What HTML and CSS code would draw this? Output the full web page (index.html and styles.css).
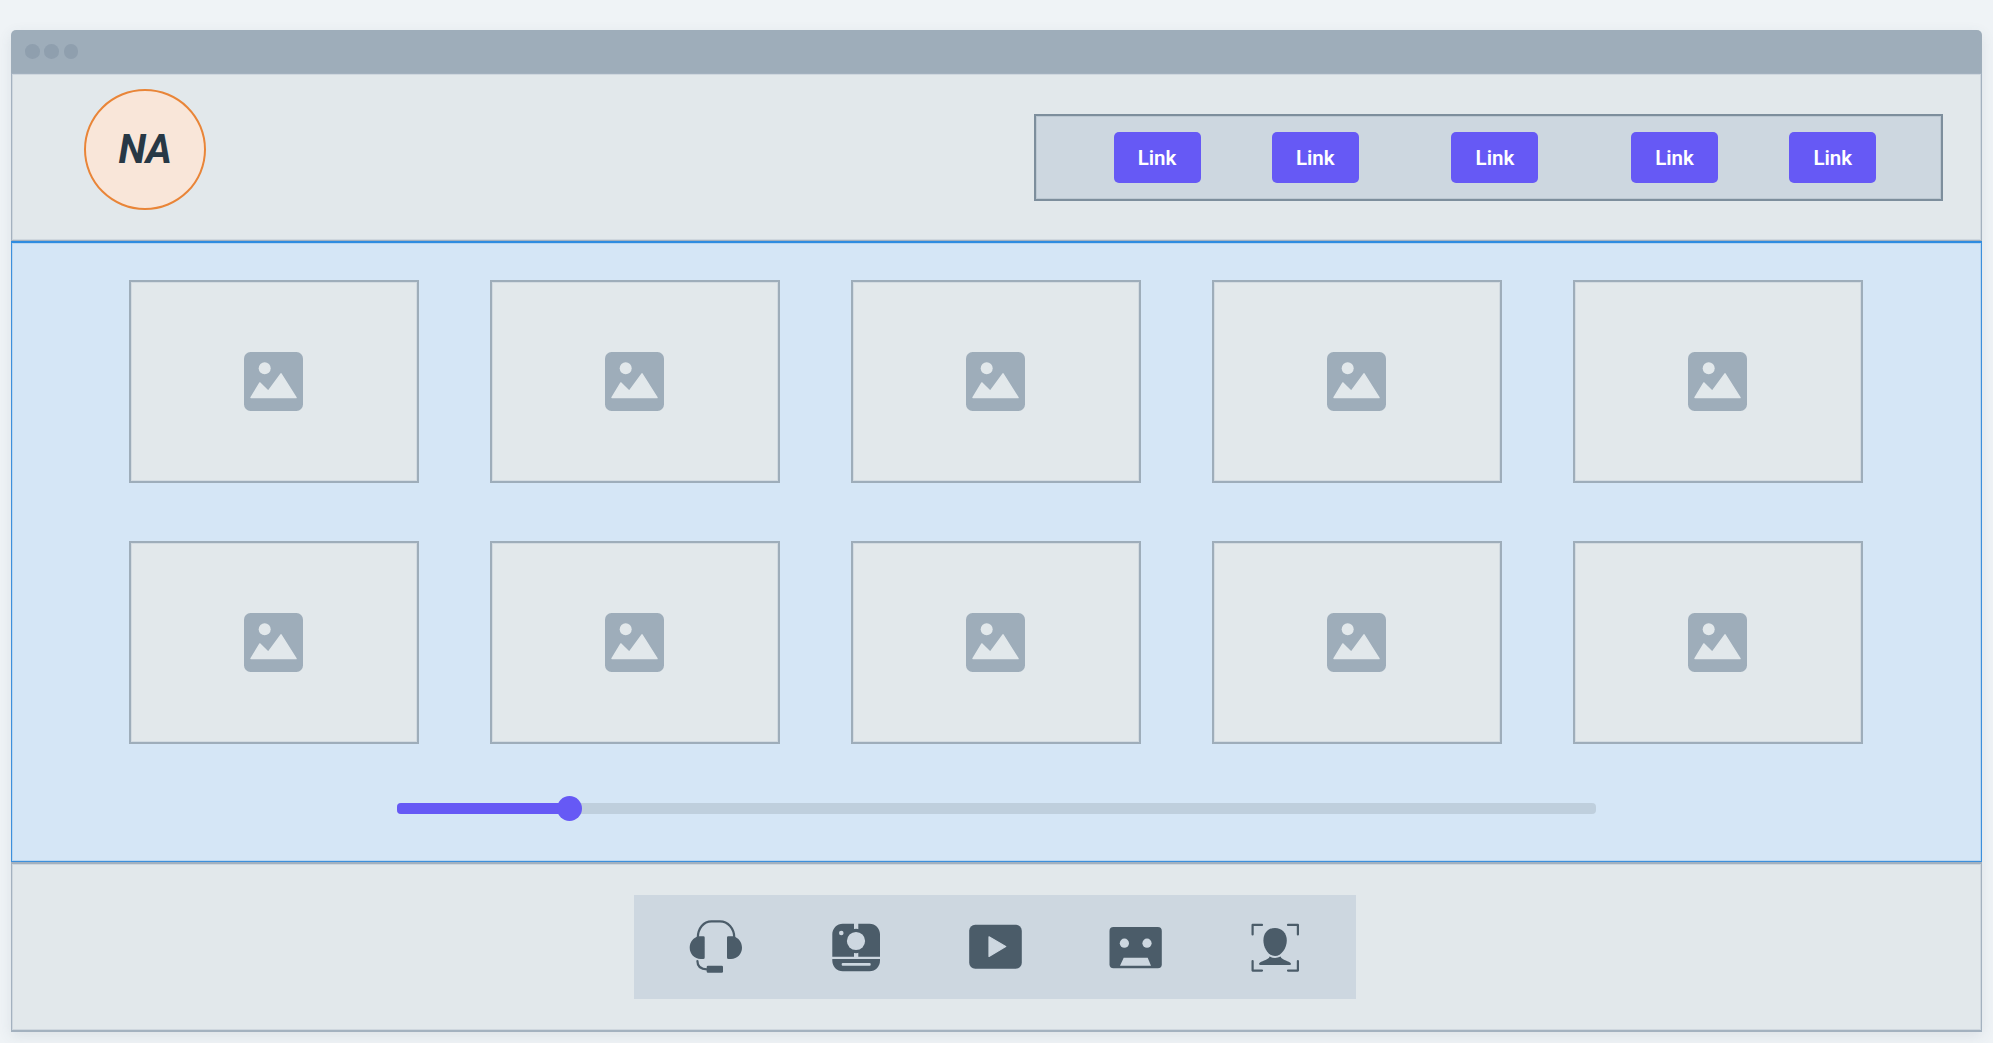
FILE: index.html
```html
<!DOCTYPE html>
<html lang="en">
<head>
<meta charset="utf-8">
<title>Gallery wireframe</title>
<link rel="stylesheet" href="styles.css">
</head>
<body>
<svg class="defs" aria-hidden="true">
  <symbol id="image" viewBox="0 0 59 59">
    <rect width="59" height="59" rx="6.5" fill="#9eadba"/>
    <circle cx="20.7" cy="16.3" r="6" fill="#e2e8eb"/>
    <path d="M7 45.6 15.9 31 24.3 39.3 37 21.9 52 45.6Z" fill="#e2e8eb" stroke="#e2e8eb" stroke-width="1.5" stroke-linejoin="round"/>
  </symbol>
</svg>
<div class="window">
  <div class="titlebar"><i></i><i></i><i></i></div>
  <header class="header">
    <div class="avatar"><span>NA</span></div>
    <nav class="nav">
      <a class="link">Link</a>
      <a class="link">Link</a>
      <a class="link wide">Link</a>
      <a class="link wide">Link</a>
      <a class="link">Link</a>
    </nav>
  </header>
  <main class="gallery">
    <div class="grid">
      <div class="card"><svg><use href="#image"/></svg></div>
      <div class="card"><svg><use href="#image"/></svg></div>
      <div class="card"><svg><use href="#image"/></svg></div>
      <div class="card"><svg><use href="#image"/></svg></div>
      <div class="card"><svg><use href="#image"/></svg></div>
      <div class="card"><svg><use href="#image"/></svg></div>
      <div class="card"><svg><use href="#image"/></svg></div>
      <div class="card"><svg><use href="#image"/></svg></div>
      <div class="card"><svg><use href="#image"/></svg></div>
      <div class="card"><svg><use href="#image"/></svg></div>
    </div>
    <div class="slider"><div class="fill"></div><div class="thumb"></div></div>
  </main>
  <footer class="footer">
    <div class="tools">
      <svg viewBox="0 0 54 54">
        <path d="M8.8 17.5C9 8.5 14.5 1.4 22.5 1.4H31C39 1.4 45.1 8.5 45.3 17.5" class="line"/>
        <path d="M15.7 17.6a1.3 1.3 0 0 0-1.3-1.3H9.2C4.2 17.8.7 22.3.7 27.8.7 34 5.5 39 11.7 39h2.5a1.5 1.5 0 0 0 1.5-1.5Z"/>
        <path d="M38 17.6a1.3 1.3 0 0 1 1.3-1.3h5.2C49.5 17.8 53 22.3 53 27.8 53 34 48.2 39 42 39h-2.5a1.5 1.5 0 0 1-1.5-1.5Z"/>
        <path d="M8.4 41C8.4 46 11.5 49.3 18 49.3" class="line"/>
        <rect x="17.7" y="45.7" width="16.3" height="7" rx="1.3"/>
      </svg>
      <svg viewBox="0 0 54 54">
        <path d="M3.3 36.7V14.2C3.3 8.4 8 3.7 13.8 3.7H25V9.6H29.3V3.7H40.5C46.3 3.7 51 8.4 51 14.2V36.7H29.3V32H25V36.7Z"/>
        <path d="M3.3 39H51v1.5C51 46.5 46.5 51.3 40.5 51.3H13.8C7.8 51.3 3.3 46.5 3.3 40.5Z"/>
        <path d="M24 10.6Q27 9 30.3 10.6M24 31.4Q27 33 30.3 31.4" class="ring"/>
        <circle cx="27" cy="21" r="9.1" class="cut"/>
        <circle cx="12.3" cy="13" r="2.3" class="cut"/>
        <rect x="12.7" y="43.1" width="29" height="2.6" rx="1" class="cut"/>
      </svg>
      <svg viewBox="0 0 54 54">
        <rect x=".2" y="4.7" width="52.6" height="44" rx="6"/>
        <path d="M20 16.8 36.7 26.6 20 36.4Z" class="cut round"/>
      </svg>
      <svg viewBox="0 0 54 54">
        <rect x=".5" y="7" width="52.3" height="41.2" rx="4"/>
        <circle cx="15.4" cy="23.2" r="4.6" class="cut"/>
        <circle cx="38" cy="23.2" r="4.6" class="cut"/>
        <path d="M14.7 37.7H38.7L42 45.8H11Z" class="cut"/>
      </svg>
      <svg viewBox="0 0 54 54">
        <path d="M3.6 14.4V4.9H13M39 4.9h9.9v9.5M48.9 41v9.6H39M13 50.6H3.6V41" class="line"/>
        <path d="M26 8C33 8 37.8 13 37.8 20.5S32.5 36 26 36 14.4 28 14.4 20.5 19 8 26 8Z"/>
        <path d="M20.6 36.6Q26 39.5 31.6 36.6C32.6 40 38 40.5 41 42.6 42.6 43.8 42 45 41 45H11C10 45 9.4 43.8 11 42.6 14 40.5 19.6 40 20.6 36.6Z"/>
      </svg>
    </div>
  </footer>
</div>
</body>
</html>
```
FILE: styles.css
```css
* { box-sizing: border-box; }
body {
  margin: 0;
  height: 1043px;
  padding: 30px 11px 0;
  overflow: hidden;
  background: #eff3f6;
  font-family: Roboto, "Liberation Sans", sans-serif;
}
.defs { display: none; }
.window {
  width: 1971px;
  border-radius: 5px 5px 0 0;
  box-shadow: 0 4px 14px rgba(60, 80, 100, .1);
}
.titlebar {
  display: flex;
  align-items: center;
  gap: 4.6px;
  height: 43px;
  padding-left: 14.2px;
  border-radius: 5px 5px 0 0;
  background: #9eadba;
}
.titlebar i {
  width: 14.7px;
  height: 14.7px;
  border-radius: 50%;
  background: #8f9fae;
}
.header {
  display: flex;
  justify-content: space-between;
  height: 168px;
  padding: 15px 38px 0 72px;
  border: 1px solid #a3b1bf;
  box-shadow: inset 0 0 0 1px #cfd7de;
  background: #e2e8eb;
}
.avatar {
  display: flex;
  align-items: center;
  justify-content: center;
  width: 122px;
  height: 121px;
  border: 2px solid #e98538;
  border-radius: 50%;
  background: #f9e6d9;
  color: #283845;
  font-size: 40px;
  font-weight: 700;
  font-style: italic;
  letter-spacing: -.5px;
}
.nav {
  display: flex;
  align-items: center;
  gap: 71.3px;
  height: 87px;
  margin-top: 25px;
  width: 909px;
  padding-left: 77.5px;
  border: 2px solid #7d8e9c;
  box-shadow: inset 0 0 0 1px #bcc8d2;
  background: #cdd7e0;
}
.link {
  display: flex;
  align-items: center;
  justify-content: center;
  width: 87px;
  height: 50.5px;
  border-radius: 5px;
  background: #6659f5;
  color: #fff;
  font-size: 20.5px;
  font-weight: 600;
}
.wide { margin-left: 21.3px; }
.gallery {
  height: 621px;
  padding: 37px 117px 0;
  border: 1px solid #3d90dc;
  border-top: 2px solid #2f8ce0;
  box-shadow: inset 0 0 0 1px #b9d6f0;
  background: #d5e6f6;
}
.grid {
  display: grid;
  grid-template-columns: repeat(5, 290px);
  gap: 57.5px 71px;
}
.card {
  display: flex;
  align-items: center;
  justify-content: center;
  height: 203px;
  border: 2px solid #9eadba;
  box-shadow: inset 0 0 0 1px #d3dbe1;
  background: #e2e8eb;
}
.card svg { width: 59px; height: 59px; margin-right: 1px; }
.slider {
  position: relative;
  width: 1199px;
  height: 11px;
  margin: 59px 0 0 268px;
  border-radius: 4px;
  background: #bfcfdd;
}
.fill {
  width: 173px;
  height: 11px;
  border-radius: 4px 0 0 4px;
  background: #6659f5;
}
.thumb {
  position: absolute;
  left: 160px;
  top: -7px;
  width: 25px;
  height: 25px;
  border-radius: 50%;
  background: #6659f5;
}
.footer {
  display: flex;
  justify-content: center;
  height: 170px;
  padding-top: 31px;
  border: 1px solid #a3b1bf;
  border-width: 2px 1px;
  box-shadow: inset 0 0 0 1px #cfd7de;
  background: #e2e8eb;
}
.tools {
  display: flex;
  align-items: center;
  gap: 86px;
  width: 722px;
  height: 104px;
  margin-right: 3px;
  padding-left: 54.5px;
  background: #cdd7e0;
}
.tools svg { width: 54px; height: 54px; fill: #4b5c69; }
.tools .line {
  fill: none;
  stroke: #4b5c69;
  stroke-width: 2.2;
  stroke-linecap: round;
  stroke-linejoin: round;
}
.tools .ring { fill: none; stroke: #4b5c69; stroke-width: 2; }
.tools .cut { fill: #cdd7e0; }
.tools .round { stroke: #cdd7e0; stroke-width: 1.2; stroke-linejoin: round; }
```
